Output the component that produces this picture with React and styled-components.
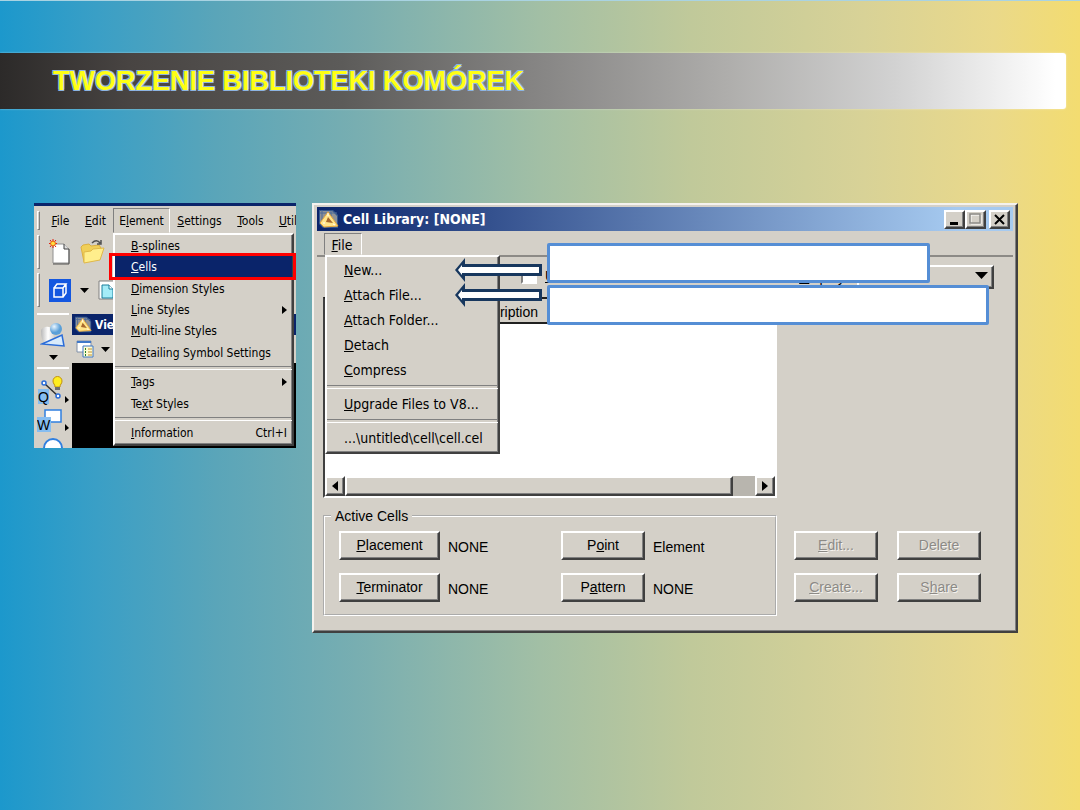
import React, { useState } from 'react';
import styled, { createGlobalStyle, css } from 'styled-components';

const GlobalStyle = createGlobalStyle`
  * {
    box-sizing: border-box;
  }
  body {
    margin: 0;
    background: #1c98cc;
  }
  button, select, input {
    font: inherit;
    margin: 0;
  }
  svg {
    flex: none;
  }
`;

const face = '#d4d0c8';
const tahoma = '"DejaVu Sans Condensed", "DejaVu Sans", sans-serif';
const arial = '"Liberation Sans", Arial, sans-serif';

const raised = css`
  border: 2px solid;
  border-color: #fff #404040 #404040 #fff;
  box-shadow: inset -1px -1px 0 #808080;
`;

/* ---------- slide ---------- */

const Slide = styled.div`
  min-height: 100vh;
  padding-top: 52px;
  border-top: 1px solid #a9d3e2;
  background: linear-gradient(
    90deg,
    #1c98cc 0%,
    #3a9fc6 9%,
    #5aa5b9 20%,
    #78aeb1 33%,
    #a2bfa5 50%,
    #c0c99a 64%,
    #d8d297 80%,
    #ead98a 92%,
    #f3dc70 100%
  );
`;

const Header = styled.header`
  display: flex;
  align-items: center;
  height: 56px;
  margin-right: 14px;
  padding-left: 53px;
  border-radius: 0 3px 3px 0;
  background: linear-gradient(90deg, #2c2a29 0%, #484442 12%, #5c5b59 32%, #858483 50%, #aeadab 68%, #d2d2d2 84%, #fff 99%);
  box-shadow: 0 0 2px rgba(255, 255, 255, 0.6);
`;

const Title = styled.h1`
  margin: 0;
  font: bold 27px/32px ${arial};
  color: #ffff14;
  white-space: nowrap;
  text-shadow: -1px -1px 0 #8db4e2, 1px -1px 0 #8db4e2, -1px 1px 0 #8db4e2, 1px 1px 0 #8db4e2;
`;

const Content = styled.main`
  display: flex;
  align-items: flex-start;
  gap: 16px;
  padding: 94px 62px 40px 34px;
`;

/* ---------- application window (left) ---------- */

const AppWindow = styled.section`
  position: relative;
  flex: 0 0 262px;
  height: 245px;
  overflow: hidden;
  background: ${face};
  border-top: 3px solid #0a246a;
  font: 12px/16px ${tahoma};
  color: #000;
`;

const MenuBar = styled.nav`
  display: flex;
  align-items: center;
  height: 27px;
  padding: 2px 0 0 3px;
`;

const Grip = styled.span`
  flex: none;
  width: 3px;
  height: ${(p) => p.$size}px;
  border: 1px solid;
  border-color: #fff #808080 #808080 #fff;
`;

const MenuButtons = styled.div`
  display: flex;
  padding-left: 3px;
`;

const MenuButton = styled.button`
  flex: none;
  width: ${(p) => p.$width}px;
  height: 25px;
  padding: 0;
  white-space: nowrap;
  color: #000;
  background: none;
  border: 1px solid transparent;
  ${(p) => p.$open && 'border-color: #808080 #fff transparent #808080;'}
`;

const Toolbar = styled.div`
  display: flex;
  align-items: center;
  gap: 9px;
  height: 38px;
  padding-left: 3px;
`;

const Workspace = styled.div`
  display: flex;
  height: 139px;
  padding-top: 4px;
`;

const ToolColumn = styled.div`
  flex: none;
  display: flex;
  flex-direction: column;
  align-items: center;
  gap: 7px;
  width: 38px;
`;

const ToolGroup = styled.div`
  flex: none;
  display: flex;
  flex-direction: column;
  align-items: center;
  gap: 3px;
`;

const Divider = styled.hr`
  flex: none;
  width: 32px;
  height: 2px;
  margin: 0;
  border: 0;
  background: #fff;
`;

const View = styled.div`
  flex: 1;
  display: flex;
  flex-direction: column;
  background: #000;
  border-top: 1px solid ${face};
`;

const ViewTitle = styled.div`
  display: flex;
  align-items: center;
  gap: 3px;
  height: 21px;
  padding-left: 3px;
  font-weight: bold;
  color: #fff;
  background: #0a246a;
`;

const ViewTools = styled.div`
  display: flex;
  align-items: center;
  gap: 7px;
  height: 28px;
  padding-left: 4px;
  background: ${face};
`;

/* ---------- menus ---------- */

const Menu = styled.ul`
  position: absolute;
  list-style: none;
  margin: 0;
  padding: 0;
  background: ${face};
  ${raised}
`;

const ElementMenu = styled(Menu)`
  top: 27px;
  left: 79px;
  right: 2px;
  display: flex;
  flex-direction: column;
  height: 213px;
`;

const FileMenu = styled(Menu)`
  top: 50px;
  left: 11px;
  width: 175px;
  padding-bottom: 2px;
`;

const MenuItem = styled.li`
  flex: 1;
  display: flex;
`;

const MenuCommand = styled.button`
  flex: 1;
  display: flex;
  align-items: center;
  justify-content: space-between;
  height: ${(p) => (p.$large ? '25px' : 'auto')};
  padding: ${(p) => (p.$large ? '0 10px 0 17px' : '0 5px 0 16px')};
  border: 0;
  white-space: nowrap;
  color: ${(p) => (p.$active ? '#fff' : '#000')};
  background: ${(p) => (p.$active ? '#0a246a' : 'transparent')};
`;

const MenuRule = styled.li`
  flex: none;
  height: ${(p) => (p.$large ? 9 : 8)}px;
  display: flex;
  align-items: center;

  &::before {
    content: '';
    flex: 1;
    height: 2px;
    border-top: 1px solid #808080;
    border-bottom: 1px solid #fff;
  }
`;

const Highlight = styled.div`
  position: absolute;
  top: 47px;
  left: 75px;
  right: 0;
  height: 27px;
  border: 3px solid #f00;
`;

/* ---------- cell library dialog (right) ---------- */

const Dialog = styled.section`
  position: relative;
  flex: 1;
  min-width: 0;
  padding: 2px 3px 15px;
  background: ${face};
  font: 14px/18px ${tahoma};
  color: #000;
  border: 2px solid;
  border-color: #f4f2ee #404040 #404040 #f4f2ee;
  box-shadow: inset -1px -1px 0 #808080;
`;

const TitleBar = styled.header`
  display: flex;
  align-items: center;
  gap: 2px;
  height: 24px;
  padding: 0 3px 0 2px;
  color: #fff;
  background: linear-gradient(90deg, #0a246a 0%, #a6caf0 92%);
`;

const DialogTitle = styled.h2`
  flex: 1;
  margin: 0 0 0 2px;
  font: bold 14px/18px ${tahoma};
  white-space: nowrap;
`;

const CaptionButton = styled.button`
  display: grid;
  place-items: center;
  width: 21px;
  height: 19px;
  padding: 0;
  background: ${face};
  ${raised}
`;

const CaptionGroup = styled.div`
  display: flex;
  margin-right: 1px;
`;

const DialogMenuBar = styled.nav`
  display: flex;
  align-items: flex-end;
  height: 26px;
  padding-left: 7px;
  border-bottom: 2px solid #8c8a86;
`;

const FileTab = styled.button`
  width: 38px;
  height: 22px;
  padding: 2px 2px 0 0;
  color: #000;
  background: none;
  border: 1px solid;
  border-color: #808080 #fff transparent #808080;
`;

const Options = styled.div`
  display: flex;
  align-items: flex-start;
  height: 40px;
  padding: 8px 19px 0 204px;
  font: 14px/22px ${arial};
`;

const CheckLabel = styled.label`
  display: flex;
  align-items: center;
  gap: 8px;
  margin-right: auto;

  input {
    appearance: none;
    width: 16px;
    height: 16px;
    background: #fff;
    border: 2px solid;
    border-color: #808080 #fff #fff #808080;
  }
`;

const DisplayLabel = styled.label`
  margin-right: 8px;
  line-height: 24px;
`;

const Select = styled.select`
  width: 137px;
  height: 24px;
  padding: 0 6px;
  appearance: none;
  border-radius: 0;
  color: #000;
  background: ${face};
  ${raised}
`;

const SelectBox = styled.div`
  display: grid;
  align-items: center;

  & > * {
    grid-area: 1 / 1;
  }
  svg {
    justify-self: end;
    margin: 0 6px 3px 0;
    pointer-events: none;
  }
`;

const Body = styled.div`
  display: grid;
  grid-template-columns: 1fr 187px;
  gap: 9px 17px;
  padding: 0 32px 0 6px;
  font-family: ${arial};
`;

const CellList = styled.div`
  height: 201px;
  display: flex;
  flex-direction: column;
  background: #fff;
  border: 2px solid;
  border-color: #202020 #fff #fff #404040;
`;

const CellTable = styled.table`
  border-collapse: collapse;
  width: 100%;

  th {
    height: 24px;
    padding: 2px 6px 0;
    text-align: left;
    font-weight: normal;
    background: ${face};
    border-bottom: 2px solid #202020;
  }
  th:first-child {
    width: 137px;
  }
`;

const ScrollBar = styled.div`
  display: flex;
  height: 20px;
  margin-top: auto;
  background: #b8b5ae;
`;

const ScrollButton = styled.button`
  width: 20px;
  height: 20px;
  padding: 0;
  display: grid;
  place-items: center;
  background: ${face};
  ${raised}
`;

const ScrollTrack = styled.div`
  flex: 1;
  padding-right: 22px;
`;

const ScrollThumb = styled.div`
  height: 20px;
  background: ${face};
  ${raised}
`;

const ActiveCells = styled.fieldset`
  display: grid;
  grid-template-columns: 101px 1fr 84px 115px;
  align-items: start;
  align-content: start;
  gap: 13px 8px;
  min-width: 0;
  height: 109px;
  margin: 0;
  padding: 6px 7px 0 14px;
  border: 2px groove #fff;

  legend {
    margin-left: -8px;
    padding: 0 4px;
    line-height: 18px;
  }
`;

const PushButton = styled.button`
  height: 29px;
  padding: 0 0 2px;
  color: #000;
  background: ${face};
  ${raised}

  &:disabled {
    color: #8c8a86;
    text-shadow: 1px 1px 0 #f4f2ee;
  }
`;

const Value = styled.output`
  padding-top: 7px;
`;

const Actions = styled.div`
  display: grid;
  grid-template-columns: 1fr 1fr;
  align-content: start;
  gap: 13px 19px;
  padding-top: 24px;
`;

/* callouts float over the dialog */
const Callout = styled.div`
  position: absolute;
  top: ${(p) => p.$top}px;
  left: 233px;
  right: ${(p) => p.$right}px;
  height: 40px;
  background: #fff;
  border: 3px solid #558ed5;
  border-radius: 2px;
`;

const CalloutArrow = styled.svg`
  position: absolute;
  top: ${(p) => p.$top}px;
  left: 139px;
`;

/* ---------- icons ---------- */

const Caret = ({ size = 9 }) => (
  <svg width={size} height={Math.ceil(size / 2)} viewBox="0 0 10 5" preserveAspectRatio="none">
    <path d="M0 0h10L5 5z" fill="#000" />
  </svg>
);

const Side = ({ left, small }) => (
  <svg width={small ? 5 : 6} height={small ? 8 : 10} viewBox="0 0 5 10" preserveAspectRatio="none">
    <path d={left ? 'M5 0v10L0 5z' : 'M0 0v10l5-5z'} fill="#000" />
  </svg>
);

const AppIcon = ({ size = 20 }) => (
  <svg width={size} height={size} viewBox="0 0 20 20">
    <path d="M0 1h14l5 5v13H4l-4-4z" fill="#35588f" />
    <path d="M1 2h12l5 5v11H4l-3-4z" fill="#8f9296" />
    <path d="M3 1v13M1 4h17M12 2v6" stroke="#4d6a98" />
    <path d="M1 14L9 3l10 14-14 1z" fill="#ffe58a" stroke="#e9a63a" />
    <path d="M7 13l2-5 5 6z" fill="#a8682c" />
    <path d="M9 4v3M4 14l2 0M14 15l2 1" stroke="#fff" />
  </svg>
);

const NewIcon = () => (
  <svg width="22" height="26" viewBox="0 0 22 26">
    <path d="M4 5h11l5 5v14H4z" fill="#fff" stroke="#909090" />
    <path d="M20 10v15H4" fill="none" stroke="#505050" />
    <path d="M15 5v5h5" fill="#e0e0e0" stroke="#404040" />
    <path d="M4 0v9M0 4.500h8M1 1l6 7M7 1L1 8" stroke="#e02010" />
    <circle cx="4" cy="4.500" r="2.400" fill="#ffe040" stroke="#f06010" />
  </svg>
);

const FolderIcon = () => (
  <svg width="25" height="26" viewBox="0 0 25 26">
    <path d="M1 8l2-2 6-1 2 2 8-1 2 3v5L4 23z" fill="#f0cf58" stroke="#dcb040" />
    <path d="M4 13l7-1 2-2 11-1-4 12-16 3z" fill="#ffee8c" stroke="#e0b848" />
    <path d="M12 4c3-3 6-3 8 0m1-3v4h-4" fill="none" stroke="#505050" strokeWidth="1.500" />
  </svg>
);

const CubeIcon = () => (
  <svg width="22" height="23" viewBox="0 0 22 23">
    <path d="M0 0h22v23H0z" fill="#1457e0" />
    <path d="M5 9h9v9H5zM5 9l3-4h9l-3 4M17 5v9l-3 4" fill="none" stroke="#fff" strokeWidth="1.500" />
  </svg>
);

const ModelIcon = () => (
  <svg width="22" height="23" viewBox="0 0 22 23">
    <path d="M1 2h14l5 5v13H1z" fill="#fff" stroke="#808080" />
    <path d="M4 6h7l4 4v9H4z" fill="#a4ecf8" stroke="#1b7f9c" />
    <path d="M11 6v4h4" fill="#fff" stroke="#1b7f9c" />
  </svg>
);

const ShapesIcon = () => (
  <svg width="26" height="26" viewBox="0 0 26 26">
    <defs>
      <radialGradient id="ball" cx="35%" cy="30%">
        <stop offset="0" stopColor="#eaf6ff" />
        <stop offset="1" stopColor="#5a9fd8" />
      </radialGradient>
      <linearGradient id="tube">
        <stop offset="0" stopColor="#b8b8b8" />
        <stop offset="0.500" stopColor="#fff" />
        <stop offset="1" stopColor="#d0d0d0" />
      </linearGradient>
    </defs>
    <path d="M1 9c0-4 9-6 11-2l3 12-10 4c-3-4-4-9-4-14z" fill="url(#tube)" />
    <circle cx="16" cy="7" r="6" fill="url(#ball)" />
    <path d="M2 22l20-9 2 11z" fill="#d8ebfb" stroke="#2a6cd8" strokeWidth="1.500" />
  </svg>
);

const BulbIcon = () => (
  <svg width="32" height="29" viewBox="0 0 32 29">
    <path d="M8 8l13 12" stroke="#303030" strokeWidth="1.500" />
    <circle cx="7" cy="7" r="2" fill="#fff" stroke="#2a6cd8" strokeWidth="1.500" />
    <circle cx="21" cy="20" r="2" fill="#fff" stroke="#2a6cd8" strokeWidth="1.500" />
    <path d="M16 5a4.500 4.500 0 0 1 9 0c0 3-2 3-2 6h-5c0-3-2-3-2-6z" fill="#ffee20" stroke="#c09010" />
    <path d="M18 11h5v3h-5z" fill="#707070" />
    <path d="M1 13h11v15H1z" fill="#86bdf0" />
    <text x="1" y="26" fontSize="14" fontFamily="Liberation Sans">Q</text>
    <path d="M28 20v7l4-3z" fill="#000" />
  </svg>
);

const FenceIcon = () => (
  <svg width="32" height="27" viewBox="0 0 32 27">
    <path d="M8 2h16v12H8z" fill="#fff" stroke="#2f7fe0" strokeWidth="1.500" />
    <path d="M0 9h14v15H0z" fill="#86bdf0" />
    <text x="0" y="22" fontSize="14" fontFamily="Liberation Sans">W</text>
    <path d="M28 16v7l4-3z" fill="#000" />
  </svg>
);

const CircleIcon = () => (
  <svg width="20" height="20" viewBox="0 0 20 20">
    <circle cx="10" cy="10" r="9" fill="#fff" stroke="#2f7fe0" strokeWidth="2" />
  </svg>
);

const ViewIcon = () => (
  <svg width="18" height="18" viewBox="0 0 18 18">
    <path d="M1 1h14v11H1z" fill="#fff" stroke="#8090a8" />
    <path d="M1 1h14v2H1z" fill="#3f78c8" />
    <path d="M7 6h10v11H7z" fill="#fffbd0" stroke="#3f78c8" />
    <path d="M9 9h1M9 12h1M9 15h1" stroke="#208030" strokeWidth="2" />
    <path d="M12 9h4M12 12h4M12 15h4" stroke="#c09030" />
  </svg>
);

const ArrowShape = ({ top }) => (
  <CalloutArrow $top={top} width="90" height="24" viewBox="0 0 90 24">
    <path d="M2 12L12 0v6h77v12H12v6z" fill="#17375e" />
    <path d="M5 12L9 7v2h77v6H9v2z" fill="#fff" />
  </CalloutArrow>
);

/* "&" marks the access key, as in a resource file */
const Label = ({ text }) => {
  const at = text.indexOf('&');
  if (at < 0) return <span>{text}</span>;
  return (
    <span>
      {text.slice(0, at)}
      <u>{text[at + 1]}</u>
      {text.slice(at + 2)}
    </span>
  );
};

const menuBar = [
  { text: '&File', width: 35 },
  { text: '&Edit', width: 35 },
  { text: 'E&lement', width: 57 },
  { text: '&Settings', width: 59 },
  { text: '&Tools', width: 43 },
  { text: '&Util', width: 32 },
];

const elementMenu = [
  { text: '&B-splines' },
  { text: '&Cells' },
  { text: '&Dimension Styles' },
  { text: '&Line Styles', sub: true },
  { text: '&Multi-line Styles' },
  { text: 'D&etailing Symbol Settings' },
  null,
  { text: '&Tags', sub: true },
  { text: 'Te&xt Styles' },
  null,
  { text: '&Information', keys: 'Ctrl+I' },
];

const fileMenu = [
  '&New...',
  '&Attach File...',
  '&Attach Folder...',
  '&Detach',
  '&Compress',
  null,
  '&Upgrade Files to V8...',
  null,
  '...\\untitled\\cell\\cell.cel',
];

const MicroStation = () => {
  const [active, setActive] = useState('&Cells');

  return (
    <AppWindow>
      <MenuBar>
        <Grip $size={19} />
        <MenuButtons>
          {menuBar.map((m) => (
            <MenuButton key={m.text} $width={m.width} $open={m.text === 'E&lement'}>
              <Label text={m.text} />
            </MenuButton>
          ))}
        </MenuButtons>
      </MenuBar>
      <Toolbar>
        <Grip $size={34} />
        <NewIcon />
        <FolderIcon />
      </Toolbar>
      <Toolbar>
        <Grip $size={34} />
        <CubeIcon />
        <Caret />
        <ModelIcon />
      </Toolbar>
      <Workspace>
        <ToolColumn>
          <Divider />
          <ShapesIcon />
          <Caret />
          <Divider />
          <ToolGroup>
            <BulbIcon />
            <FenceIcon />
            <CircleIcon />
          </ToolGroup>
        </ToolColumn>
        <View>
          <ViewTitle>
            <AppIcon size={17} />
            Vie
          </ViewTitle>
          <ViewTools>
            <ViewIcon />
            <Caret />
          </ViewTools>
        </View>
      </Workspace>
      <ElementMenu>
        {elementMenu.map((item, i) =>
          item ? (
            <MenuItem key={item.text}>
              <MenuCommand $active={item.text === active} onClick={() => setActive(item.text)}>
                <Label text={item.text} />
                {item.sub && <Side small />}
                {item.keys && <span>{item.keys}</span>}
              </MenuCommand>
            </MenuItem>
          ) : (
            <MenuRule key={i} />
          )
        )}
      </ElementMenu>
      <Highlight />
    </AppWindow>
  );
};

const CellLibrary = () => (
  <Dialog>
    <TitleBar>
      <AppIcon />
      <DialogTitle>Cell Library: [NONE]</DialogTitle>
      <CaptionGroup>
        <CaptionButton aria-label="Minimize">
          <svg width="11" height="11">
            <path d="M1 8h8v3H1z" />
          </svg>
        </CaptionButton>
        <CaptionButton aria-label="Maximize">
          <svg width="13" height="12">
            <path d="M2 2h10v9H2z" fill="none" stroke="#fff" />
            <path d="M1 1h10v9H1z" fill="none" stroke="#8c8a86" strokeWidth="1.500" />
          </svg>
        </CaptionButton>
      </CaptionGroup>
      <CaptionButton aria-label="Close">
        <svg width="11" height="11">
          <path d="M1 1l9 9M10 1l-9 9" stroke="#000" strokeWidth="2" />
        </svg>
      </CaptionButton>
    </TitleBar>
    <DialogMenuBar>
      <FileTab>
        <Label text="&File" />
      </FileTab>
    </DialogMenuBar>
    <Options>
      <CheckLabel>
        <input type="checkbox" />
        <Label text="&Use Shared Cells" />
      </CheckLabel>
      <DisplayLabel htmlFor="display">
        <Label text="&Display:" />
      </DisplayLabel>
      <SelectBox>
        <Select id="display" />
        <Caret size={13} />
      </SelectBox>
    </Options>
    <Body>
      <CellList>
        <CellTable>
          <thead>
            <tr>
              <th />
              <th>Description</th>
            </tr>
          </thead>
        </CellTable>
        <ScrollBar>
          <ScrollButton aria-label="Scroll left">
            <Side left />
          </ScrollButton>
          <ScrollTrack>
            <ScrollThumb />
          </ScrollTrack>
          <ScrollButton aria-label="Scroll right">
            <Side />
          </ScrollButton>
        </ScrollBar>
      </CellList>
      <span />
      <ActiveCells>
        <legend>Active Cells</legend>
        <PushButton>
          <Label text="&Placement" />
        </PushButton>
        <Value>NONE</Value>
        <PushButton>
          <Label text="P&oint" />
        </PushButton>
        <Value>Element</Value>
        <PushButton>
          <Label text="&Terminator" />
        </PushButton>
        <Value>NONE</Value>
        <PushButton>
          <Label text="P&attern" />
        </PushButton>
        <Value>NONE</Value>
      </ActiveCells>
      <Actions>
        <PushButton disabled>
          <Label text="&Edit..." />
        </PushButton>
        <PushButton disabled>
          <Label text="Delete" />
        </PushButton>
        <PushButton disabled>
          <Label text="&Create..." />
        </PushButton>
        <PushButton disabled>
          <Label text="S&hare" />
        </PushButton>
      </Actions>
    </Body>
    <FileMenu>
      {fileMenu.map((text, i) =>
        text ? (
          <MenuItem key={text}>
            <MenuCommand $large>
              <Label text={text} />
            </MenuCommand>
          </MenuItem>
        ) : (
          <MenuRule key={i} $large />
        )
      )}
    </FileMenu>
    <Callout $top={38} $right={86} />
    <Callout $top={80} $right={27} />
    <ArrowShape top={53} />
    <ArrowShape top={78} />
  </Dialog>
);

export default function App() {
  return (
    <>
      <GlobalStyle />
      <Slide>
        <Header>
          <Title>TWORZENIE BIBLIOTEKI KOMÓREK</Title>
        </Header>
        <Content>
          <MicroStation />
          <CellLibrary />
        </Content>
      </Slide>
    </>
  );
}
